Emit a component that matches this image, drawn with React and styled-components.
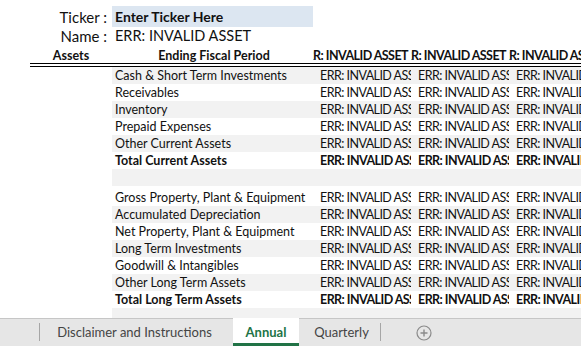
import React from "react"
import styled, { createGlobalStyle } from "styled-components"

const GlobalStyle = createGlobalStyle`
  html, body {
    margin: 0;
    padding: 0;
    background: #fff;
  }
  body {
    font-family: Lato, "Liberation Sans", sans-serif;
    color: #111;
  }
`

const Page = styled.div`
  width: 581px;
  height: 346px;
  display: flex;
  flex-direction: column;
  overflow: hidden;
`

const Sheet = styled.div`
  flex: 1;
  overflow: hidden;
`

const Row = styled.div`
  display: flex;
  height: ${(props) => props.h || 17}px;
  align-items: stretch;
`

const Lead = styled.div`
  flex: 0 0 112px;
  display: flex;
  align-items: ${(props) => props.align || "center"};
  justify-content: ${(props) => (props.center ? "center" : "flex-end")};
  padding: ${(props) => (props.center ? "0 0 0 30px" : "0 5px 0 0")};
  box-sizing: border-box;
  line-height: ${(props) => (props.big ? "normal" : "14px")};
  font-size: ${(props) => (props.big ? 15 : 12.5)}px;
  font-weight: ${(props) => (props.bold ? 700 : 400)};
  white-space: nowrap;
`

const Band = styled.div`
  flex: 1;
  display: grid;
  grid-template-columns: 201px repeat(3, 98px);
  background: ${(props) => (props.shade ? "#f2f2f2" : "transparent")};
`

const Cell = styled.div`
  display: flex;
  align-items: flex-end;
  justify-content: ${(props) => props.justify || "flex-start"};
  padding-left: ${(props) => props.pad ?? 3}px;
  padding-right: ${(props) => props.padR ?? 0}px;
  overflow: hidden;
  white-space: nowrap;
  line-height: ${(props) => props.lh || 17}px;
  font-size: 12.5px;
  font-weight: ${(props) => (props.bold ? 700 : 400)};
  letter-spacing: ${(props) => (props.caps ? "-0.55px" : "normal")};
`

const TickerBox = styled.div`
  margin-top: 6px;
  background: #dce6f1;
  display: flex;
  align-items: center;
  padding-left: 3px;
  font-size: 14px;
  font-weight: 700;
  white-space: nowrap;
`

const NameValue = styled.div`
  display: flex;
  align-items: center;
  padding: 0 0 2px 3px;
  font-size: 14.5px;
  white-space: nowrap;
`

const DoubleRule = styled.div`
  margin-left: 30px;
  height: 2px;
  border-top: 1px solid #000;
  border-bottom: 1px solid #000;
`

const TabBar = styled.div`
  flex: 0 0 28px;
  display: flex;
  align-items: stretch;
  background: #e6e6e6;
  border-top: 1px solid #c6c6c6;
  box-sizing: border-box;
  font-size: 13px;
  color: #444;
`

const Sep = styled.div`
  width: 1px;
  background: #a6a6a6;
  margin: 4px 0 5px ${(props) => props.left || 0}px;
`

const Tab = styled.div`
  display: flex;
  align-items: center;
  justify-content: center;
  width: ${(props) => props.w}px;
  padding-left: ${(props) => props.shift || 0}px;
  margin-top: -1px;
  box-sizing: border-box;
  white-space: nowrap;
  ${(props) =>
    props.active &&
    `
    background: #fff;
    color: #217346;
    font-weight: 700;
    border-bottom: 3px solid #217346;
    padding-top: 2px;
  `}
`

const AddButton = styled.div`
  display: flex;
  align-items: center;
  margin-left: 35px;
  color: #8a8a8a;
`

const Plus = () => (
  <svg width="16" height="16" viewBox="0 0 16 16">
    <circle cx="8" cy="8" r="7" fill="none" stroke="currentColor" strokeWidth="1.2" />
    <path d="M8 4.5v7M4.5 8h7" stroke="currentColor" strokeWidth="1.4" />
  </svg>
)

const ERR = "ERR: INVALID ASSET"

const items = [
  { label: "Cash & Short Term Investments" },
  { label: "Receivables" },
  { label: "Inventory" },
  { label: "Prepaid Expenses" },
  { label: "Other Current Assets" },
  { label: "Total Current Assets", bold: true },
  { label: "", blank: true },
  { label: "Gross Property, Plant & Equipment", h: 20 },
  { label: "Accumulated Depreciation" },
  { label: "Net Property, Plant & Equipment" },
  { label: "Long Term Investments" },
  { label: "Goodwill & Intangibles" },
  { label: "Other Long Term Assets" },
  { label: "Total Long Term Assets", bold: true },
  { label: "", blank: true },
]

const App = () => {
  return (
    <Page>
      <GlobalStyle />
      <Sheet>
        <Row h={27}>
          <Lead big style={{ paddingTop: 6 }}>Ticker :</Lead>
          <Band>
            <TickerBox>Enter Ticker Here</TickerBox>
          </Band>
        </Row>
        <Row h={19}>
          <Lead big style={{ paddingBottom: 2 }}>Name :</Lead>
          <Band>
            <NameValue>{ERR}</NameValue>
          </Band>
        </Row>
        <Row h={17}>
          <Lead center bold align="flex-end">Assets</Lead>
          <Band>
            <Cell justify="center" bold lh={14}>Ending Fiscal Period</Cell>
            {[0, 1, 2].map((c) => (
              <Cell key={c} justify="flex-end" pad={0} padR={3} bold caps lh={14}>
                {ERR}
              </Cell>
            ))}
          </Band>
        </Row>
        <DoubleRule />
        {items.map((item, idx) => (
          <Row key={idx} h={item.h}>
            <Lead />
            <Band shade={idx % 2 === 0}>
              <Cell bold={item.bold}>{item.label}</Cell>
              {[0, 1, 2].map((c) => (
                <Cell key={c} pad={7} caps bold={item.bold}>
                  {item.blank ? "" : ERR}
                </Cell>
              ))}
            </Band>
          </Row>
        ))}
      </Sheet>
      <TabBar>
        <Sep left={39} />
        <Tab w={193} style={{ paddingRight: 4 }}>Disclaimer and Instructions</Tab>
        <Tab w={66} active>Annual</Tab>
        <Tab w={81} shift={4}>Quarterly</Tab>
        <Sep />
        <AddButton>
          <Plus />
        </AddButton>
      </TabBar>
    </Page>
  )
}

export default App
